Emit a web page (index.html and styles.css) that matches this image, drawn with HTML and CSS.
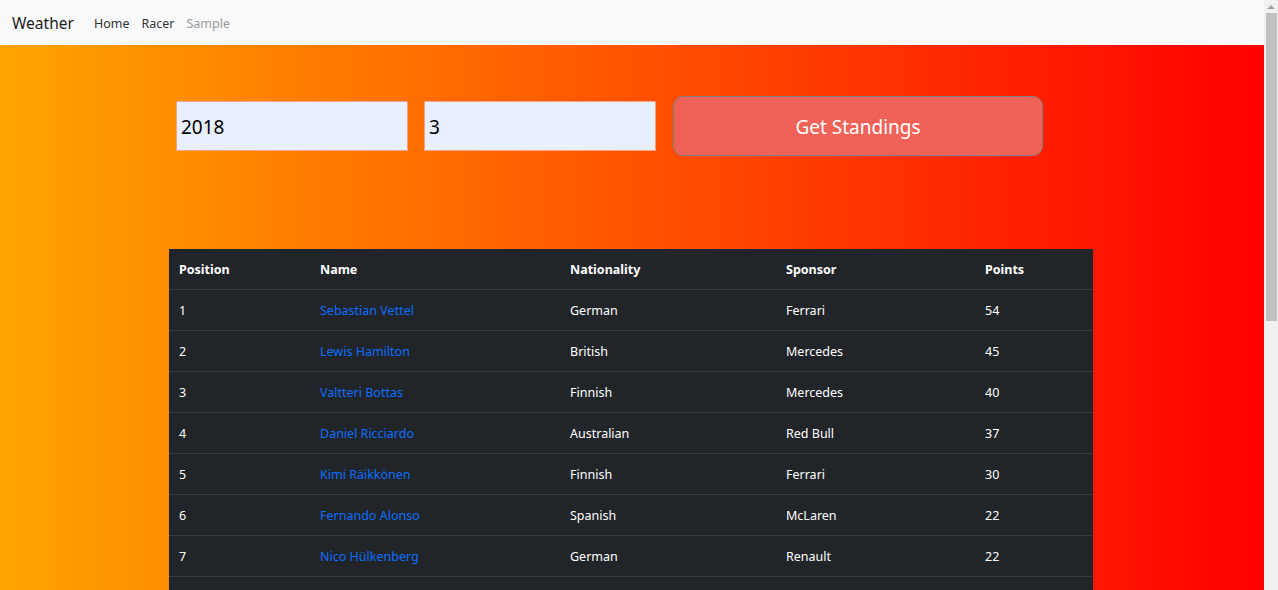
FILE: index.html
```html
<!DOCTYPE html>
<html>
<head>
<meta charset="utf-8">
<link rel="stylesheet" href="styles.css">
</head>
<body>
<div class="window">
  <div class="page">
    <nav class="navbar">
      <span class="brand">Weather</span>
      <a class="nav-link" href="#">Home</a>
      <a class="nav-link" href="#">Racer</a>
      <a class="nav-link disabled" href="#">Sample</a>
    </nav>
    <main class="main">
      <div class="container">
        <form class="form">
          <input class="field" type="text" value="2018">
          <input class="field" type="text" value="3">
          <button class="btn" type="button">Get Standings</button>
        </form>
        <table class="table">
          <thead>
            <tr><th class="c1">Position</th><th class="c2">Name</th><th class="c3">Nationality</th><th class="c4">Sponsor</th><th class="c5">Points</th></tr>
          </thead>
          <tbody>
            <tr><td>1</td><td><a href="#">Sebastian Vettel</a></td><td>German</td><td>Ferrari</td><td>54</td></tr>
            <tr><td>2</td><td><a href="#">Lewis Hamilton</a></td><td>British</td><td>Mercedes</td><td>45</td></tr>
            <tr><td>3</td><td><a href="#">Valtteri Bottas</a></td><td>Finnish</td><td>Mercedes</td><td>40</td></tr>
            <tr><td>4</td><td><a href="#">Daniel Ricciardo</a></td><td>Australian</td><td>Red Bull</td><td>37</td></tr>
            <tr><td>5</td><td><a href="#">Kimi Räikkönen</a></td><td>Finnish</td><td>Ferrari</td><td>30</td></tr>
            <tr><td>6</td><td><a href="#">Fernando Alonso</a></td><td>Spanish</td><td>McLaren</td><td>22</td></tr>
            <tr><td>7</td><td><a href="#">Nico Hülkenberg</a></td><td>German</td><td>Renault</td><td>22</td></tr>
            <tr class="filler"><td></td><td></td><td></td><td></td><td></td></tr>
          </tbody>
        </table>
      </div>
    </main>
  </div>
  <div class="scrollbar">
    <div class="arrow"></div>
    <div class="thumb"></div>
  </div>
</div>
</body>
</html>
```
FILE: styles.css
```css
html, body {
  margin: 0;
  padding: 0;
  overflow: hidden;
}
body {
  font-family: "Noto Sans", "Open Sans", sans-serif;
  color: #212529;
}
.window {
  display: flex;
  height: 590px;
  overflow: hidden;
}
.page {
  flex: 1;
  min-width: 0;
  overflow: hidden;
}
.scrollbar {
  width: 14px;
  background: #f0f0f0;
  display: flex;
  flex-direction: column;
  align-items: center;
}
.arrow {
  margin-top: 5px;
  width: 0;
  height: 0;
  border-left: 4px solid transparent;
  border-right: 4px solid transparent;
  border-bottom: 4px solid #a3a3a3;
}
.thumb {
  margin-top: 4px;
  width: 11px;
  height: 308px;
  margin-left: 1px;
  background: #c1c1c1;
}
.navbar {
  height: 45px;
  box-sizing: border-box;
  background: #f8f9fa;
  display: flex;
  align-items: center;
  padding-left: 12px;
  padding-top: 1px;
}
.brand {
  font-size: 15.5px;
  color: #1d1d1d;
  margin-right: 14px;
}
.nav-link {
  font-size: 12.5px;
  color: #333;
  text-decoration: none;
  padding: 0 6px;
}
.nav-link.disabled {
  color: #999;
}
.main {
  background: linear-gradient(to right, #ffa500, #ff0000);
  padding-top: 51px;
  height: 545px;
  box-sizing: border-box;
}
.container {
  width: 924px;
  margin-left: calc(50% - 463px);
}
.form {
  display: flex;
  align-items: center;
  padding-left: 7px;
  margin: 0;
}
.field {
  width: 232px;
  height: 50px;
  box-sizing: border-box;
  border: 1px solid #f2a38a;
  background: #e8f0fe;
  font-family: "Noto Sans", sans-serif;
  font-size: 19px;
  color: #000;
  padding: 2px 4px 0;
  margin-right: 16px;
  outline: none;
}
.btn {
  width: 370px;
  height: 60px;
  margin-left: 1px;
  box-sizing: border-box;
  background: #f06158;
  border: 1px solid #808080;
  border-radius: 10px;
  color: #fff;
  font-family: "Noto Sans", sans-serif;
  font-size: 19px;
  padding-top: 2px;
}
.table {
  margin-top: 93px;
  width: 924px;
  border-collapse: collapse;
  background: #212529;
  color: #fff;
  font-size: 12.5px;
}
.table th, .table td {
  text-align: left;
  padding: 11px 10px 9px;
  line-height: 20px;
  border-bottom: 1px solid #373b3e;
}
.table th {
  font-weight: 700;
}
.c1 { width: 121px; }
.c2 { width: 230px; }
.c3 { width: 196px; }
.c4 { width: 179px; }
.table a {
  color: #0d6efd;
  text-decoration: none;
}
```
